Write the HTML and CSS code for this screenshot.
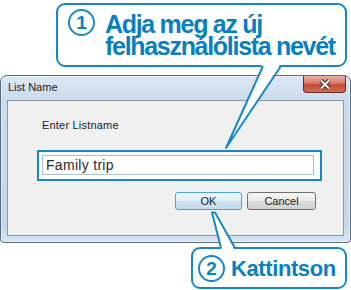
FILE: index.html
```html
<!DOCTYPE html>
<html>
<head>
<meta charset="utf-8">
<link rel="stylesheet" href="styles.css">
</head>
<body>
<div class="page">
  <div class="bubble b1">
    <span class="num">1</span>
    <div class="msg">Adja meg az új<br>felhasználólista nevét</div>
  </div>
  <div class="dialog">
    <div class="titlebar">
      <span class="title">List Name</span>
      <span class="close"><svg width="14" height="11" viewBox="0 0 14 11"><path d="M3,1.5 L11,9.5 M11,1.5 L3,9.5" stroke="#4a2420" stroke-width="4" fill="none"/><path d="M3,1.5 L11,9.5 M11,1.5 L3,9.5" stroke="#fff" stroke-width="2" fill="none"/></svg></span>
    </div>
    <div class="panel">
      <div class="label">Enter Listname</div>
      <div class="hl"><div class="input">Family trip</div></div>
      <div class="buttons"><span class="btn ok">OK</span><span class="btn">Cancel</span></div>
    </div>
  </div>
  <div class="bubble b2">
    <span class="num">2</span>
    <span class="msg2">Kattintson</span>
  </div>
  <svg class="pointers" width="351" height="290" viewBox="0 0 351 290">
    <polygon points="263,63 281,63 226,148" fill="#fff"/>
    <polyline points="263,66 226,148 281,66" fill="none" stroke="#1888c4" stroke-width="2" stroke-linejoin="round"/>
    <polygon points="221.5,250 212.5,212.5 215,212.5 234.5,250" fill="#fff"/>
    <polyline points="221,248 212,212.5 215,212.5 235,248" fill="none" stroke="#1888c4" stroke-width="2" stroke-linejoin="round"/>
  </svg>
</div>
</body>
</html>
```
FILE: styles.css
```css
* { box-sizing: border-box; }
body { margin: 0; background: #fff; font-family: "Liberation Sans", Arial, sans-serif; }
.page { position: relative; width: 351px; height: 290px; overflow: hidden; display: flex; flex-direction: column; align-items: flex-start; }
.bubble { border: 2px solid #1888c4; border-radius: 9px; background: #fff; display: flex; align-items: flex-start; color: #0a7fc0; font-weight: bold; }
.b1 { margin: 3px 0 0 56px; width: 291px; height: 64px; padding: 8px 0 0 10px; }
.num { width: 27px; height: 27px; border: 2px solid #1888c4; border-radius: 50%; display: flex; align-items: center; justify-content: center; font-size: 19px; line-height: 1; flex: none; }
.b1 .num { margin: -4px 10px 0 0; }
.msg { font-size: 25px; line-height: 22px; letter-spacing: -1.3px; white-space: nowrap; }
.b2 { margin: 4px 0 0 191px; width: 156px; height: 42px; padding: 6px 0 0 5px; }
.msg2 { font-size: 22px; line-height: 26px; letter-spacing: -0.4px; margin: 1px 0 0 6px; white-space: nowrap; }
.dialog { margin-top: 8px; width: 351px; height: 168px; border: 1px solid #5a6b7d; border-radius: 7px 7px 4px 4px; background: linear-gradient(180deg, #dde8f3 0, #cbdcec 24px, #c4d7e9 150px, #d6e4f1 100%); display: flex; flex-direction: column; box-shadow: inset 0 0 0 1px rgba(255,255,255,0.55); }
.titlebar { height: 24px; display: flex; align-items: flex-start; justify-content: space-between; padding: 0 4px 0 7px; }
.title { font-size: 11px; line-height: 13px; margin-top: 5px; color: #1b1b1b; }
.close { width: 43px; height: 17px; border: 1px solid #6b2a22; border-top: none; border-radius: 0 0 4px 4px; background: linear-gradient(180deg, #e8b0a6 0, #d77868 45%, #c34a36 55%, #d06d58 100%); display: flex; align-items: center; justify-content: center; }
.close svg { display: block; }
.panel { margin: 0 6px 6px; flex: 1; background: #f0f0f0; border: 1px solid #8c9aa8; display: flex; flex-direction: column; align-items: flex-start; padding: 18px 0 0 34px; }
.label { font-size: 11px; line-height: 13px; color: #1a1a1a; letter-spacing: 0.2px; }
.hl { margin: 18px 0 0 -5px; width: 285px; height: 31px; border: 2px solid #1888c4; background: #fff; padding: 3px 6px 4px 3px; }
.input { height: 20px; border: 1px solid #abc0d2; font-size: 14px; line-height: 16px; padding: 1px 0 0 3px; color: #2b2b2b; letter-spacing: 0.3px; background: #fff; }
.buttons { align-self: flex-end; margin: 11px 27px 0 0; display: flex; gap: 5px; }
.btn { height: 18px; width: 69px; border: 1px solid #707070; border-radius: 3px; background: linear-gradient(180deg, #f4f4f4 0, #ebebeb 50%, #dedede 50%, #d0d0d0 100%); font-size: 11px; line-height: 16px; text-align: center; color: #1a1a1a; }
.ok { width: 67px; border-color: #4aa2d6; background: linear-gradient(180deg, #eef6fb 0, #e0eef7 50%, #d0e4f1 50%, #c4dcec 100%); }
.pointers { position: absolute; left: 0; top: 0; pointer-events: none; }
```
